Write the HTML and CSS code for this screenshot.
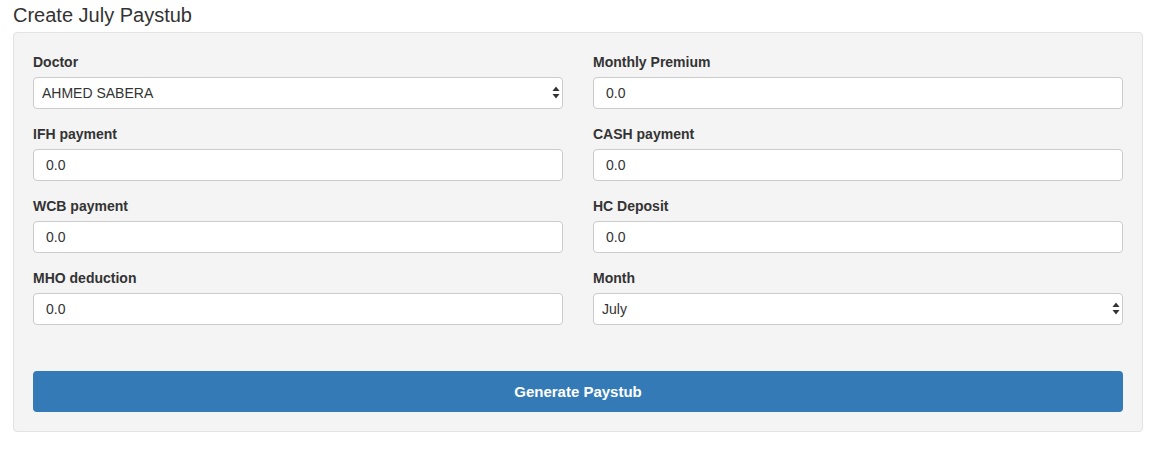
FILE: index.html
```html
<!DOCTYPE html>
<html lang="en">

<head>
    <meta charset="UTF-8">
    <title>Create July Paystub</title>
    <link rel="stylesheet" href="styles.css">
</head>

<body>
    <div class="page">
        <h3 class="page-title">Create July Paystub</h3>
        <form class="well">
            <div class="form-grid">
                <div class="form-group">
                    <label>Doctor</label>
                    <div class="select-wrap">
                        <select class="form-select">
                            <option>AHMED SABERA</option>
                        </select>
                        <svg class="select-arrows" width="8" height="13" viewBox="0 0 8 13">
                            <path d="M4 0.5 L7.5 5 L0.5 5 Z" fill="#333" />
                            <path d="M4 12.5 L7.5 8 L0.5 8 Z" fill="#333" />
                        </svg>
                    </div>
                </div>
                <div class="form-group">
                    <label>Monthly Premium</label>
                    <input type="text" class="form-control" value="0.0">
                </div>
                <div class="form-group">
                    <label>IFH payment</label>
                    <input type="text" class="form-control" value="0.0">
                </div>
                <div class="form-group">
                    <label>CASH payment</label>
                    <input type="text" class="form-control" value="0.0">
                </div>
                <div class="form-group">
                    <label>WCB payment</label>
                    <input type="text" class="form-control" value="0.0">
                </div>
                <div class="form-group">
                    <label>HC Deposit</label>
                    <input type="text" class="form-control" value="0.0">
                </div>
                <div class="form-group">
                    <label>MHO deduction</label>
                    <input type="text" class="form-control" value="0.0">
                </div>
                <div class="form-group">
                    <label>Month</label>
                    <div class="select-wrap">
                        <select class="form-select">
                            <option>July</option>
                        </select>
                        <svg class="select-arrows" width="8" height="13" viewBox="0 0 8 13">
                            <path d="M4 0.5 L7.5 5 L0.5 5 Z" fill="#333" />
                            <path d="M4 12.5 L7.5 8 L0.5 8 Z" fill="#333" />
                        </svg>
                    </div>
                </div>
            </div>
            <button type="button" class="btn-primary">Generate Paystub</button>
        </form>
    </div>
</body>

</html>
```

FILE: styles.css
```css
body {
    margin: 0;
    font-family: 'Liberation Sans', Arial, sans-serif;
    font-size: 14px;
    color: #333;
    background: #fff;
}

.page {
    padding: 0 15px 0 13px;
}

.page-title {
    margin: 0;
    padding-top: 3px;
    font-size: 20px;
    font-weight: normal;
    line-height: 24px;
    height: 29px;
}

.well {
    margin: 0;
    width: 1130px;
    box-sizing: border-box;
    background: #f4f4f4;
    border: 1px solid #e3e3e3;
    border-radius: 4px;
    padding: 19px 19px 19px 19px;
}

.form-grid {
    display: grid;
    grid-template-columns: 1fr 1fr;
    column-gap: 30px;
}

.form-group {
    margin-bottom: 15px;
}

.form-group label {
    display: block;
    font-weight: bold;
    line-height: 20px;
    margin-bottom: 5px;
}

.form-control,
.form-select {
    display: block;
    width: 100%;
    height: 32px;
    box-sizing: border-box;
    border: 1px solid #cbcbcb;
    border-radius: 4px;
    background: #fff;
    font-family: 'Liberation Sans', Arial, sans-serif;
    color: #333;
    margin: 0;
}

.form-control {
    padding: 0 12px;
    font-size: 14px;
}

.form-select {
    appearance: none;
    -webkit-appearance: none;
    padding: 0 8px;
    font-size: 14px;
}

.select-wrap {
    position: relative;
}

.select-arrows {
    position: absolute;
    right: 3px;
    top: 9px;
}

.btn-primary {
    display: block;
    width: 100%;
    height: 41px;
    margin-top: 31px;
    background: #337ab7;
    color: #fff;
    border: none;
    border-radius: 4px;
    font-family: 'Liberation Sans', Arial, sans-serif;
    font-size: 15px;
    font-weight: bold;
}
```
